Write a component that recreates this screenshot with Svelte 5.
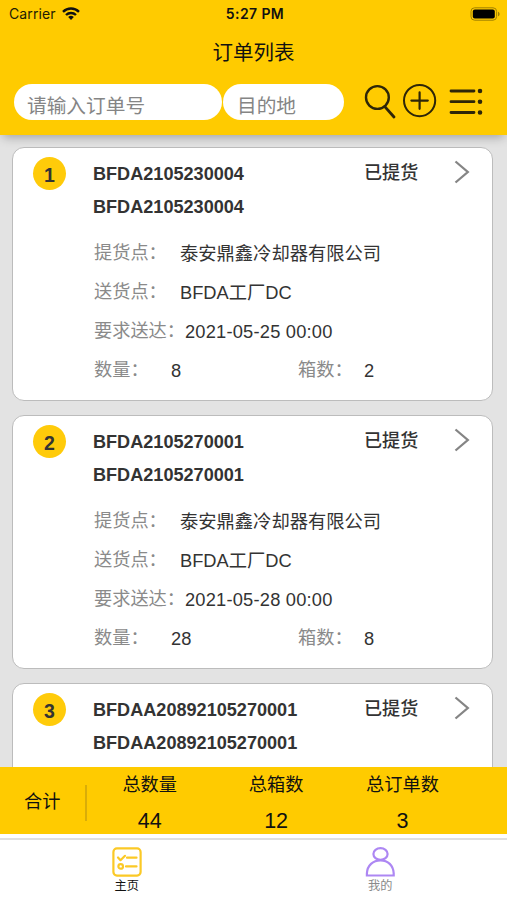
<script lang="ts">
	type Order = {
		code: string;
		status: string;
		details?: {
			pickup: string;
			delivery: string;
			deadline: string;
			quantity: number;
			boxes: number;
		};
	};

	const orders: Order[] = [
		{
			code: 'BFDA2105230004',
			status: '已提货',
			details: {
				pickup: '泰安鼎鑫冷却器有限公司',
				delivery: 'BFDA工厂DC',
				deadline: '2021-05-25 00:00',
				quantity: 8,
				boxes: 2
			}
		},
		{
			code: 'BFDA2105270001',
			status: '已提货',
			details: {
				pickup: '泰安鼎鑫冷却器有限公司',
				delivery: 'BFDA工厂DC',
				deadline: '2021-05-28 00:00',
				quantity: 28,
				boxes: 8
			}
		},
		{
			code: 'BFDAA20892105270001',
			status: '已提货'
		}
	];

	const totals = [
		{ label: '总数量', value: 44 },
		{ label: '总箱数', value: 12 },
		{ label: '总订单数', value: 3 }
	];

	let orderNo = $state('');
	let destination = $state('');
</script>

<div class="screen">
	<header>
		<div class="statusBar">
			<div class="carrier">
				<span>Carrier</span>
				<svg width="18" height="13" viewBox="0 0 18 13" fill="none" stroke="#111" stroke-width="2.4">
					<path d="M1 4.8a11.4 11.4 0 0 1 16 0" />
					<path d="M4 8a7.2 7.2 0 0 1 10 0" />
					<path d="M9 13 6.2 10.1a4 4 0 0 1 5.6 0Z" fill="#111" stroke="none" />
				</svg>
			</div>
			<div class="time">5:27 PM</div>
			<div class="battery">
				<svg width="31" height="14" viewBox="0 0 31 14">
					<rect x="1" y="0.8" width="25.6" height="12.4" rx="3.6" fill="none" stroke="#a08000" />
					<rect x="2.8" y="2.6" width="22" height="8.8" rx="2" fill="#000" />
					<path d="M28 4.7v4.6c1-.4 1.6-1.2 1.6-2.3S29 5.1 28 4.7Z" fill="#a08000" />
				</svg>
			</div>
		</div>
		<h1>订单列表</h1>
		<div class="searchRow">
			<input class="orderInput" placeholder="请输入订单号" bind:value={orderNo} />
			<input class="destinationInput" placeholder="目的地" bind:value={destination} />
			<div class="actions">
				<button type="button" aria-label="搜索">
					<svg width="32" height="36" viewBox="0 0 32 36" fill="none" stroke="#2e2608">
						<circle cx="13.4" cy="13.5" r="11.4" stroke-width="2.4" />
						<path d="M20.8 22.6 30 33" stroke-width="2.8" stroke-linecap="round" />
					</svg>
				</button>
				<button type="button" aria-label="新增">
					<svg width="36" height="36" viewBox="0 0 36 36" fill="none" stroke="#2e2608" stroke-width="2">
						<circle cx="17.6" cy="16.6" r="15.6" />
						<path d="M17.6 8.4v16.4M9.4 16.6h16.4" stroke-width="2.2" stroke-linecap="round" />
					</svg>
				</button>
				<button type="button" class="menu" aria-label="菜单">
					<svg width="34" height="36" viewBox="0 0 34 36" stroke="#2e2608" stroke-linecap="round">
						<path d="M2 7h23M2 17.7h23M2 28.5h23" stroke-width="2.8" />
						<path d="M31 7h.01M31 17.7h.01M31 28.5h.01" stroke-width="4.6" />
					</svg>
				</button>
			</div>
		</div>
	</header>

	<main>
		{#each orders as order, i}
			<article class="card">
				<div class="badge">{i + 1}</div>
				<div class="body">
					<div class="heading">
						<div class="codes">
							<div>{order.code}</div>
							<div>{order.code}</div>
						</div>
						<div class="status">{order.status}</div>
						<svg class="arrow" width="16" height="24" viewBox="0 0 16 24" fill="none" stroke="#858585" stroke-width="2.3">
							<path d="m1.500 1.500 12.300 10.500L1.500 22.500" />
						</svg>
					</div>
					{#if order.details}
						<div class="row">
							<span class="label place">提货点：</span>
							<span>{order.details.pickup}</span>
						</div>
						<div class="row">
							<span class="label place">送货点：</span>
							<span>{order.details.delivery}</span>
						</div>
						<div class="row">
							<span class="label deadline">要求送达：</span>
							<span class="date">{order.details.deadline}</span>
						</div>
						<div class="row">
							<span class="label count">数量：</span>
							<span class="quantity">{order.details.quantity}</span>
							<span class="label boxes">箱数：</span>
							<span>{order.details.boxes}</span>
						</div>
					{/if}
				</div>
			</article>
		{/each}
	</main>

	<section class="totals">
		<div class="totalsTitle">合计</div>
		{#each totals as total}
			<div class="total">
				<div class="totalLabel">{total.label}</div>
				<div class="totalValue">{total.value}</div>
			</div>
		{/each}
	</section>

	<nav>
		<button type="button" class="tab active">
			<svg width="30" height="30" viewBox="0 0 30 30" fill="none" stroke="#fbc926" stroke-width="2.2" stroke-linecap="round" stroke-linejoin="round">
				<rect x="1.4" y="1.4" width="27.2" height="27.2" rx="3.5" />
				<path d="m6 10.500 2.500 2.700 4.500-4.400M15 10.700h9.500M14 19.400h10.500" />
				<circle cx="8.7" cy="19.4" r="2.3" />
			</svg>
			<span>主页</span>
		</button>
		<button type="button" class="tab">
			<svg width="30" height="30" viewBox="0 0 30 30" fill="none" stroke="#ad87f3" stroke-width="2.2">
				<ellipse cx="15.5" cy="7" rx="7.1" ry="5.8" />
				<path d="M1.9 28.5v-2.200C2.300 18.500 8 13.300 15.500 13.300S28.300 18.500 28.700 26.300v2.200Z" />
			</svg>
			<span>我的</span>
		</button>
	</nav>
</div>

<style>
	:global(body) {
		margin: 0;
	}

	.screen {
		display: flex;
		flex-direction: column;
		width: 507px;
		height: 900px;
		overflow: hidden;
		background: #e3e3e3;
		color: #333;
		font-family: 'Liberation Sans', 'Noto Sans CJK SC', sans-serif;
		font-size: 18.2px;
	}

	button {
		display: flex;
		padding: 0;
		border: none;
		background: none;
		font-family: inherit;
		cursor: pointer;
	}

	svg {
		display: block;
		flex: none;
	}

	header {
		z-index: 1;
		flex: none;
		box-sizing: border-box;
		height: 135px;
		background: #ffcb00;
		box-shadow: 0 5px 10px -3px rgba(0, 0, 0, 0.3);
	}

	.statusBar {
		display: grid;
		grid-template-columns: 1fr auto 1fr;
		align-items: center;
		height: 27px;
		padding: 0 6px 0 9px;
		font-family: Inter, sans-serif;
		font-size: 14px;
		color: #221c04;
	}

	.carrier {
		display: flex;
		align-items: center;
		gap: 6px;
		letter-spacing: 0.1px;
	}

	.time {
		font-weight: 600;
		letter-spacing: 0.4px;
		color: #111;
	}

	.battery {
		justify-self: end;
	}

	h1 {
		margin: 0;
		height: 50px;
		line-height: 51px;
		font-size: 20.5px;
		font-weight: 400;
		text-align: center;
		color: #111;
	}

	.searchRow {
		display: flex;
		gap: 1px;
		padding: 7px 0 0 14px;
	}

	input {
		box-sizing: border-box;
		height: 36px;
		padding: 8px 13px 0;
		border: none;
		border-radius: 18px;
		outline: none;
		background: #fff;
		font-family: inherit;
		font-size: 19.7px;
		color: #333;
	}

	input::placeholder {
		color: #858585;
		opacity: 1;
	}

	.orderInput {
		width: 208px;
	}

	.destinationInput {
		width: 121px;
		padding-left: 14px;
	}

	.actions {
		display: flex;
		gap: 6px;
		margin-left: 19px;
	}

	.menu {
		margin-left: 5px;
	}

	main {
		flex: 1;
		min-height: 0;
		overflow: hidden;
		display: flex;
		flex-direction: column;
		gap: 14px;
		padding: 12px 14px 0 12px;
	}

	.card {
		display: flex;
		flex: none;
		box-sizing: border-box;
		height: 254px;
		padding: 9px 0 0 20px;
		border: 1px solid #bcbcbc;
		border-radius: 12px;
		background: #fff;
	}

	.badge {
		width: 33px;
		height: 33px;
		border-radius: 50%;
		background: #ffcb0a;
		font-size: 19.5px;
		font-weight: 700;
		line-height: 37px;
		text-align: center;
	}

	.body {
		flex: 1;
		padding: 1px 0 0 27px;
	}

	.heading {
		display: flex;
		height: 76px;
		font-size: 18.1px;
		font-weight: 700;
		line-height: 33px;
	}

	.codes {
		width: 271px;
	}

	.status {
		width: 90px;
		line-height: 30px;
		font-weight: 500;
	}

	.arrow {
		margin-top: 2px;
	}

	.row {
		display: flex;
		height: 39px;
		line-height: 39px;
		padding-left: 1px;
		font-size: 18.3px;
		white-space: nowrap;
	}

	.label {
		color: #8a8a8a;
		font-size: 18.2px;
	}

	.date {
		letter-spacing: 0.2px;
	}

	.place {
		width: 86px;
	}

	.deadline {
		width: 91px;
	}

	.count {
		width: 77px;
	}

	.quantity {
		width: 127px;
	}

	.boxes {
		width: 66px;
	}

	.totals {
		display: flex;
		flex: none;
		align-items: center;
		height: 67px;
		background: #ffcb00;
		color: #111;
	}

	.totalsTitle {
		box-sizing: border-box;
		width: 86.500px;
		height: 36px;
		margin-top: 4px;
		border-right: 2px solid #d9ad08;
		line-height: 34px;
		text-align: center;
	}

	.total {
		width: 126.400px;
		text-align: center;
	}

	.totalLabel {
		height: 34px;
		line-height: 36px;
	}

	.totalValue {
		height: 33px;
		line-height: 40px;
		font-size: 21.5px;
	}

	nav {
		display: flex;
		flex: none;
		box-sizing: border-box;
		height: 66px;
		border-top: 4px solid #fff;
		background: #fff;
	}

	.tab {
		flex: 1;
		flex-direction: column;
		align-items: center;
		padding-top: 7px;
		border-top: 2px solid #e0e0e0;
		font-size: 12.2px;
		line-height: 18px;
		color: #8a8a8a;
	}

	.tab.active {
		color: #111;
	}
</style>
